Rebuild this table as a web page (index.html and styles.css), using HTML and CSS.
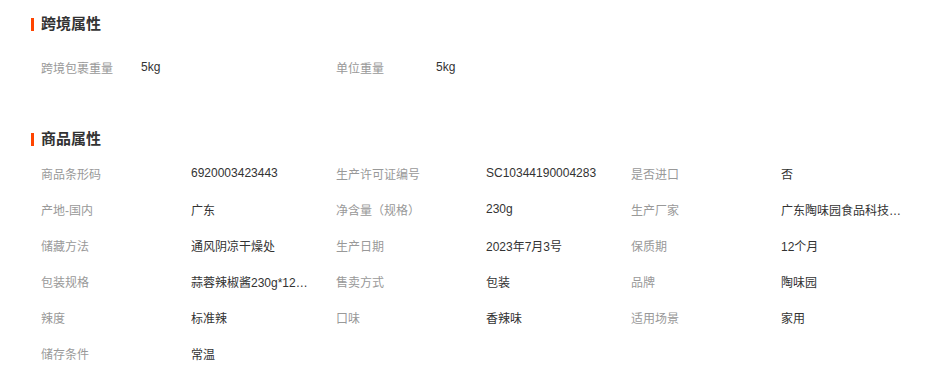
FILE: index.html
```html
<!DOCTYPE html>
<html lang="zh-CN">
<head>
<meta charset="utf-8">
<title>商品属性</title>
<link rel="stylesheet" href="styles.css">
</head>
<body>
<div class="page">
  <section class="attr-section cross">
    <h3 class="attr-title">跨境属性</h3>
    <div class="attr-grid grid-cross">
      <span class="label">跨境包裹重量</span><span class="value">5kg</span>
      <span class="label">单位重量</span><span class="value">5kg</span>
    </div>
  </section>
  <section class="attr-section product">
    <h3 class="attr-title">商品属性</h3>
    <div class="attr-grid grid-product">
      <span class="label">商品条形码</span><span class="value">6920003423443</span>
      <span class="label">生产许可证编号</span><span class="value">SC10344190004283</span>
      <span class="label">是否进口</span><span class="value">否</span>

      <span class="label">产地-国内</span><span class="value">广东</span>
      <span class="label">净含量（规格）</span><span class="value">230g</span>
      <span class="label">生产厂家</span><span class="value">广东陶味园食品科技有限公司</span>

      <span class="label">储藏方法</span><span class="value">通风阴凉干燥处</span>
      <span class="label">生产日期</span><span class="value">2023年7月3号</span>
      <span class="label">保质期</span><span class="value">12个月</span>

      <span class="label">包装规格</span><span class="value">蒜蓉辣椒酱230g*12瓶/箱</span>
      <span class="label">售卖方式</span><span class="value">包装</span>
      <span class="label">品牌</span><span class="value">陶味园</span>

      <span class="label">辣度</span><span class="value">标准辣</span>
      <span class="label">口味</span><span class="value">香辣味</span>
      <span class="label">适用场景</span><span class="value">家用</span>

      <span class="label">储存条件</span><span class="value">常温</span>
    </div>
  </section>
</div>
</body>
</html>
```
FILE: styles.css
```css
* { box-sizing: border-box; }
html, body { margin: 0; padding: 0; background: #fff; }
body {
  font-family: "Liberation Sans", "Noto Sans CJK SC", sans-serif;
  font-size: 12px;
  color: #333;
}
.page {
  padding: 14px 0 0 31px;
}
.attr-title {
  margin: 0;
  height: 20px;
  line-height: 20px;
  font-size: 15px;
  font-weight: bold;
  color: #333;
  display: flex;
  align-items: center;
  gap: 7px;
}
.attr-title::before {
  content: "";
  width: 3px;
  height: 13px;
  background: #ff4400;
}
.attr-grid {
  display: grid;
  padding-left: 10px;
  grid-auto-rows: 36px;
  align-items: center;
}
.grid-cross {
  margin-top: 15px;
  grid-template-columns: 100px 195px 100px 200px;
}
.product {
  margin-top: 44px;
}
.grid-product {
  margin-top: 6px;
  grid-template-columns: 150px 145px 150px 145px 150px 145px;
}
.label {
  color: #999;
  white-space: nowrap;
}
.value {
  color: #333;
  white-space: nowrap;
  overflow: hidden;
  text-overflow: ellipsis;
  max-width: 123px;
}
```
